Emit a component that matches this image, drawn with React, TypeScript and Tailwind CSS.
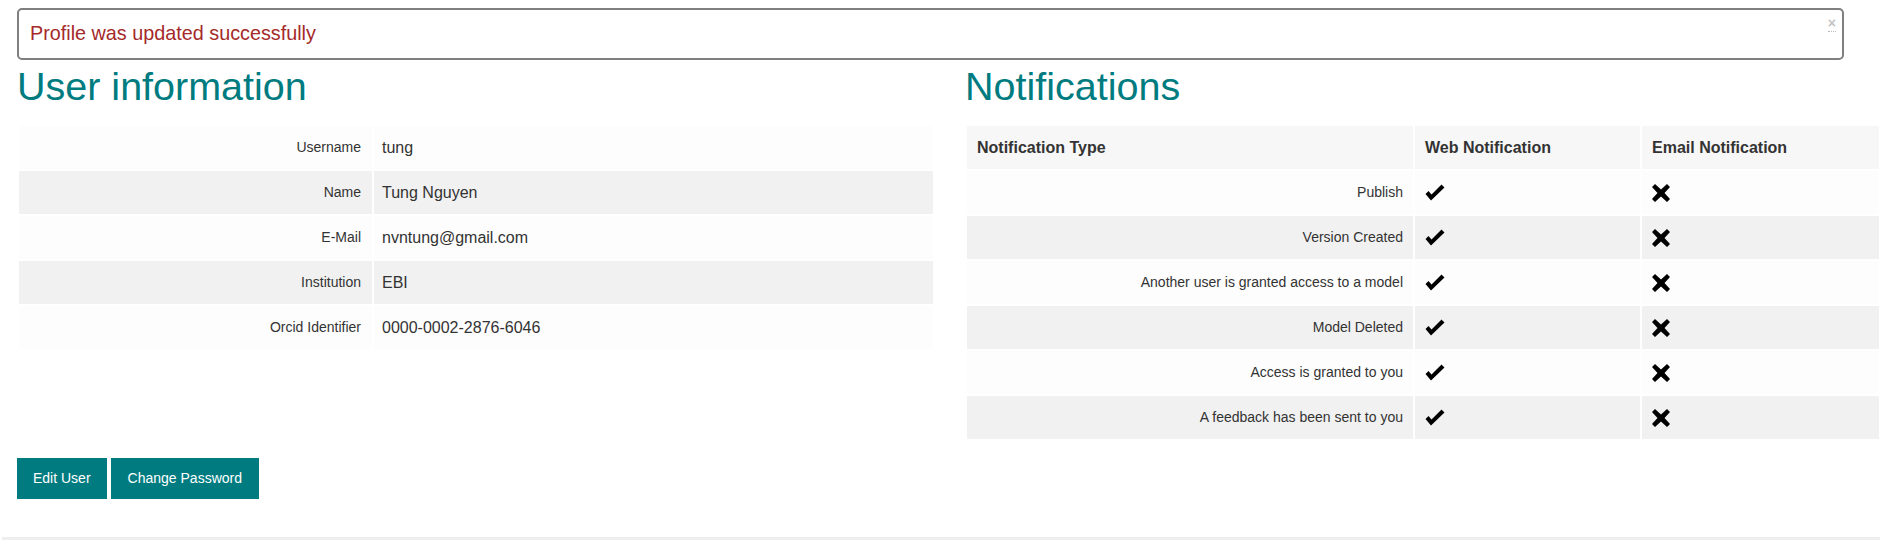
import React from "react";

const userRows = [
  {label: "Username", value: "tung"},
  {label: "Name", value: "Tung Nguyen"},
  {label: "E-Mail", value: "nvntung@gmail.com"},
  {label: "Institution", value: "EBI"},
  {label: "Orcid Identifier", value: "0000-0002-2876-6046"},
];

const notificationRows = [
  "Publish",
  "Version Created",
  "Another user is granted access to a model",
  "Model Deleted",
  "Access is granted to you",
  "A feedback has been sent to you",
];

function CheckIcon() {
  return (
    <svg width="20" height="17" viewBox="0 0 20 17" className="block">
      <polygon points="0.5,10 3.5,7 6.5,10.5 16.5,0.5 19.5,3.5 6,16.5" fill="#000"/>
    </svg>
  );
}

function CrossIcon() {
  return (
    <svg width="18" height="18" viewBox="0 0 18 18" className="block">
      <polygon points="3,0 9,5.5 15,0 18,3 12.5,9 18,15 15,18 9,12.5 3,18 0,15 5.5,9 0,3" fill="#000"/>
    </svg>
  );
}

export default function App() {
    // odd rows are nearly white, even rows light grey
    const rowBg = (index: number) => index % 2 === 0 ? "bg-[#fdfdfd]" : "bg-[#f1f1f1]";

    return (
        <div className="w-[1890px] h-[545px] bg-white font-['Liberation_Sans',Arial,sans-serif] text-[#333]">
            <div className="pt-[8px] pl-[17px]">
                <div className="relative w-[1827px] h-[52px] border-2 border-[#7f7f7f] rounded-[5px] flex items-center pl-[11px]">
                    <span className="text-[19.8px] text-[#a52a2a]">Profile was updated successfully</span>
                    <span className="absolute right-[6px] top-[5px] text-[14px] font-bold leading-[16px] text-[#c4c4c4] border-b border-dotted border-[#bbb]">×</span>
                </div>

                <div className="flex gap-[30px]">
                    <div className="w-[918px]">
                        <h2 className="mt-[4px] h-[44px] text-[39.5px] leading-[44px] text-[#007c80]">User information</h2>
                        <table className="mt-[16px] w-[918px] border-separate border-spacing-[2px]">
                            <tbody>
                            {userRows.map((row, index) => (
                                <tr key={row.label} className={rowBg(index)}>
                                    <td className="w-[353px] h-[43px] pr-[11px] text-right text-[14px]">{row.label}</td>
                                    <td className="h-[43px] pl-[8px] text-[16px]">{row.value}</td>
                                </tr>
                            ))}
                            </tbody>
                        </table>
                        <div className="mt-[107px] flex gap-[4px]">
                            <button className="h-[41px] px-[16px] bg-[#007c80] text-white text-[14px]">Edit User</button>
                            <button className="h-[41px] px-[17px] bg-[#007c80] text-white text-[14px]">Change Password</button>
                        </div>
                    </div>

                    <div className="w-[918px]">
                        <h2 className="mt-[4px] h-[44px] text-[39.5px] leading-[44px] text-[#007c80]">Notifications</h2>
                        <table className="mt-[16px] w-[916px] border-separate border-spacing-[2px]">
                            <thead>
                            <tr className="bg-[#f7f7f7]">
                                <th className="w-[446px] h-[43px] pl-[10px] text-left text-[16px] font-bold">Notification Type</th>
                                <th className="w-[225px] h-[43px] pl-[10px] text-left text-[16px] font-bold">Web Notification</th>
                                <th className="h-[43px] pl-[10px] text-left text-[16px] font-bold">Email Notification</th>
                            </tr>
                            </thead>
                            <tbody>
                            {notificationRows.map((name, index) => (
                                <tr key={name} className={rowBg(index)}>
                                    <td className="h-[43px] pr-[10px] text-right text-[14px]">{name}</td>
                                    <td className="h-[43px] pl-[10px]"><CheckIcon/></td>
                                    <td className="h-[43px] pl-[10px]"><CrossIcon/></td>
                                </tr>
                            ))}
                            </tbody>
                        </table>
                    </div>
                </div>
            </div>
            <div className="mt-[38px] ml-[2px] w-[1878px] h-[3px] bg-[#eeeeee]"/>
        </div>
    );
}
